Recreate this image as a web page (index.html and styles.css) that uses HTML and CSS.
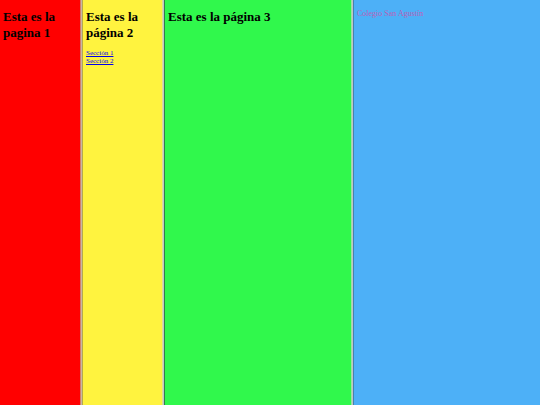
FILE: index.html
```html
<!DOCTYPE html>
<html lang="es">
<head>
<meta charset="utf-8">
<title>Colegio San Agustín</title>
<link rel="stylesheet" href="styles.css">
</head>
<body>
<main class="frames">
  <section class="pane pane-red"><h1>Esta es la pagina 1</h1></section>
  <section class="pane pane-yellow">
    <h1>Esta es la página 2</h1>
    <nav class="links">
      <a href="#seccion1">Sección 1</a>
      <a href="#seccion2">Sección 2</a>
    </nav>
  </section>
  <section class="pane pane-green"><h1>Esta es la página 3</h1></section>
  <section class="pane pane-blue"><p class="school">Colegio San Agustín</p></section>
</main>
</body>
</html>
```
FILE: styles.css
```css
* {
  box-sizing: border-box;
}

body {
  margin: 0;
  font-family: "Liberation Serif", serif;
  color: #000;
}

.frames {
  display: grid;
  grid-template-columns: 83fr 82fr 189fr 186fr;
  min-height: 100vh;
}

.pane {
  padding: 9px 6px 9px 3px;
}

/* Each divider is three 1px lines along the right edge of its pane. */
.pane-red {
  background: #ff0000;
  box-shadow: inset -1px 0 #b5aa4c, inset -2px 0 #c9b5a5, inset -3px 0 #d08068;
}

.pane-yellow {
  background: #fff33f;
  box-shadow: inset -1px 0 #347f4a, inset -2px 0 #c4c4c4, inset -3px 0 #e0dc9a;
}

.pane-green {
  background: #30f84c;
  box-shadow: inset -1px 0 #4682ac, inset -2px 0 #c0c4c4, inset -3px 0 #9be0a4;
}

.pane-blue {
  padding-right: 3px;
  background: #4db0f7;
}

h1 {
  margin: 0;
  font-size: 13px;
  line-height: 16px;
}

.links {
  display: flex;
  flex-direction: column;
  align-items: flex-start;
  margin-top: 8px;
  font-size: 7px;
  line-height: 8px;
}

.links a {
  color: #0000ee;
}

.school {
  margin: 0;
  font-size: 8px;
  line-height: 9px;
  color: #b862b8;
}
```
